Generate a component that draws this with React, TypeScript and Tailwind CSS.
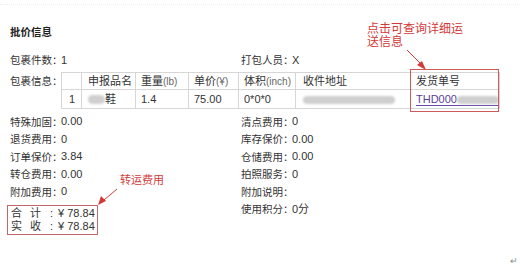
const base = "font-['Liberation_Sans','Noto_Sans_CJK_SC',sans-serif]";

function Row({ label, value }: { label: string; value?: string }) {
  return (
    <div className="flex h-[17.5px] items-center">
      <span className="w-[51px] shrink-0 whitespace-nowrap text-[10.5px]">{label}</span>
      <span>{value}</span>
    </div>
  );
}

function Blob({ className }: { className: string }) {
  return <span className={`inline-block rounded-full bg-[#cfcfcf] blur-[1px] align-middle ${className}`}></span>;
}

export default function App() {
  return (
    <div className={`relative h-[268px] w-[520px] overflow-hidden bg-white text-[11px] leading-none text-[#333] ${base}`}>
      <div className="h-[5px] border-b border-dotted border-[#eeeeee]"></div>
      <div className="px-[10px] pt-[19px]">
        <div className="flex h-4 items-center text-[10.5px] font-bold text-[#222]">批价信息</div>

        <div className="mt-3 flex h-4 items-center">
          <div className="flex w-[231px] items-center">
            <span className="w-[51px] whitespace-nowrap text-[10.5px]">包裹件数：</span>
            <span>1</span>
          </div>
          <span className="w-[51px] whitespace-nowrap text-[10.5px]">打包人员：</span>
          <span>X</span>
        </div>

        <div className="mt-1 flex">
          <span className="w-[51px] shrink-0 whitespace-nowrap pt-[4px] text-[10.5px]">包裹信息：</span>
          <table className="w-[439px] border-collapse">
            <thead>
              <tr className="h-[17px]">
                <th className="w-[20px] border border-[#d6d6d6] font-normal"></th>
                <th className="w-[54px] border border-[#d6d6d6] pl-[6px] text-left font-normal">申报品名</th>
                <th className="w-[53px] border border-[#d6d6d6] pl-[5px] text-left font-normal">
                  重量<span className="text-[10px] text-[#666]">(lb)</span>
                </th>
                <th className="w-[50px] border border-[#d6d6d6] pl-[5px] text-left font-normal">
                  单价<span className="text-[10px] text-[#666]">(¥)</span>
                </th>
                <th className="w-[57px] border border-[#d6d6d6] pl-[5px] text-left font-normal">
                  体积<span className="text-[10px] text-[#666]">(inch)</span>
                </th>
                <th className="w-[115px] border border-[#d6d6d6] pl-[7px] text-left font-normal">收件地址</th>
                <th className="border border-[#d6d6d6] pl-[5px] text-left font-normal">发货单号</th>
              </tr>
            </thead>
            <tbody>
              <tr className="h-[19px]">
                <td className="border border-[#d6d6d6] pl-[7px]">1</td>
                <td className="border border-[#d6d6d6] pl-[6px]">
                  <Blob className="h-[9px] w-[17px]" />鞋
                </td>
                <td className="border border-[#d6d6d6] pl-[5px]">1.4</td>
                <td className="border border-[#d6d6d6] pl-[5px]">75.00</td>
                <td className="border border-[#d6d6d6] pl-[5px]">0*0*0</td>
                <td className="border border-[#d6d6d6] pl-[7px]">
                  <Blob className="h-[8px] w-[92px]" />
                </td>
                <td className="border border-[#d6d6d6] pl-[5px]">
                  <span className="border-b border-[#6b4aa8] text-[#5b3d9e]">
                    THD000<Blob className="h-[8px] w-[42px]" />
                  </span>
                </td>
              </tr>
            </tbody>
          </table>
        </div>

        <div className="mt-[4px] flex">
          <div className="w-[231px]">
            <Row label="特殊加固：" value="0.00" />
            <Row label="退货费用：" value="0" />
            <Row label="订单保价：" value="3.84" />
            <Row label="转仓费用：" value="0.00" />
            <Row label="附加费用：" value="0" />
            <div className="mt-[4px] w-[91px] -translate-x-[3px] border border-[#c0686a] py-[1px] pl-[3px]">
              <div className="flex h-[13px] items-center">
                <span className="w-[39px] tracking-[8px]">合计</span>
                <span>:</span>
                <span className="ml-[5px]">¥ 78.84</span>
              </div>
              <div className="flex h-[13px] items-center">
                <span className="w-[39px] tracking-[8px]">实收</span>
                <span>:</span>
                <span className="ml-[5px]">¥ 78.84</span>
              </div>
            </div>
          </div>
          <div>
            <Row label="清点费用：" value="0" />
            <Row label="库存保价：" value="0.00" />
            <Row label="仓储费用：" value="0.00" />
            <Row label="拍照服务：" value="0" />
            <Row label="附加说明：" />
            <Row label="使用积分：" value="0分" />
          </div>
        </div>
      </div>

      <div className="absolute left-[410px] top-[69px] h-[43px] w-[89px] border border-[#cf5a5c]"></div>

      <div className="absolute left-[367px] top-[23px] text-[12px] leading-[13px] text-[#d23a3a]">
        点击可查询详细运
        <br />
        送信息
      </div>
      <div className="absolute left-[120px] top-[175px] text-[11px] text-[#d23a3a]">转运费用</div>

      <svg className="absolute left-0 top-0" width="520" height="268">
        <line x1="407" y1="50" x2="422" y2="65" stroke="#d23a3a" strokeWidth="1" />
        <polygon points="426,70 417,65 422,61" fill="#d23a3a" />
        <line x1="117" y1="189" x2="104" y2="200" stroke="#d23a3a" strokeWidth="1" />
        <polygon points="98,205 101,196 106,201" fill="#d23a3a" />
      </svg>

      <span className="absolute left-[510px] top-[257px] text-[9px] text-[#888]">↵</span>
    </div>
  );
}
